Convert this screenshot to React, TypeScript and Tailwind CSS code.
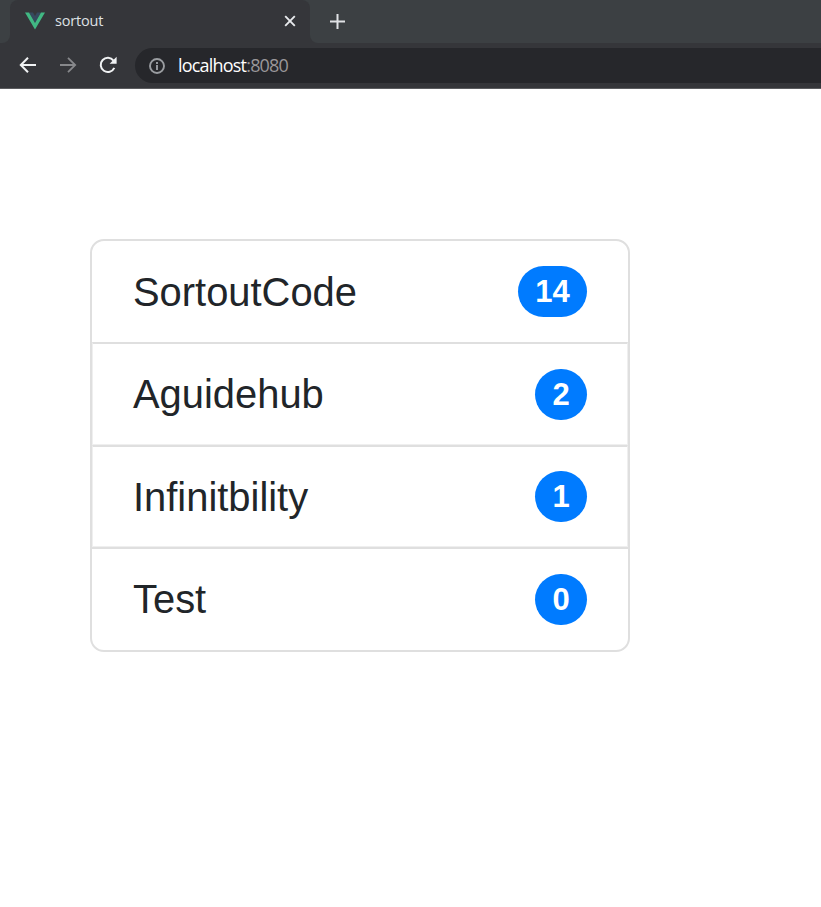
const items = [
  { name: "SortoutCode", count: 14, row: "h-[101px] px-[41px]", label: "", badge: "" },
  {
    name: "Aguidehub",
    count: 2,
    row: "h-[103px] border border-t-2 border-[#efefef] border-t-[#dfdfdf] px-10",
    label: "-mt-px",
    badge: "mt-px",
  },
  {
    name: "Infinitbility",
    count: 1,
    row: "h-[102px] border border-t-2 border-[#efefef] border-t-[#dfdfdf] px-10",
    label: "mt-px",
    badge: "",
  },
  {
    name: "Test",
    count: 0,
    row: "h-[103px] border-t-2 border-[#dfdfdf] px-[41px]",
    label: "-mt-[2px]",
    badge: "",
  },
];

function TabStrip() {
  return (
    <div className="flex h-[43px] bg-[#3c4043]">
      <div className="flex w-[10px] bg-[#35363a]">
        <div className="w-full rounded-br-[8px] bg-[#3c4043]" />
      </div>
      <div className="flex w-[300px] items-center rounded-t-[8px] bg-[#35363a] pl-[15px] pr-[14px]">
        <svg className="mt-[-2px] h-[18px] w-5" viewBox="0 0 20 18">
          <path d="M4 .5h4l2 3.4L12 .5h4L10 11z" fill="#35495e" />
          <path d="M0 .5h4L10 11 16 .5h4L10 17.5z" fill="#41b883" />
        </svg>
        <span className="ml-[10px] mt-[-2px] flex-1 text-[14.5px] leading-5 tracking-[-0.2px] text-[#dfe1e5]">
          sortout
        </span>
        <svg className="mt-[-1px] h-3 w-3" viewBox="0 0 12 12" fill="none" stroke="#e8eaed" strokeWidth="1.9">
          <path d="M1.2 1.2l9.6 9.6M10.8 1.2l-9.6 9.6" />
        </svg>
      </div>
      <div className="flex-1 bg-[#35363a]">
        <div className="flex h-full items-center rounded-bl-[8px] bg-[#3c4043] pl-5">
          <svg className="h-[15px] w-[15px]" viewBox="0 0 15 15" fill="none" stroke="#e0e2e5" strokeWidth="2">
            <path d="M7.5 0v15M0 7.5h15" />
          </svg>
        </div>
      </div>
    </div>
  );
}

function Toolbar() {
  return (
    <div className="flex h-[46px] border-b border-[#5b5c5f] bg-[#35363a] pt-[5px]">
      <div className="flex h-[35px] w-[135px] items-center gap-6 pl-[19px]">
        <svg className="-mt-px h-4 w-[17px]" viewBox="0 0 17 16" fill="none" stroke="#f1f3f4" strokeWidth="2">
          <path d="M17 8H2M9 .8L1.8 8 9 15.2" />
        </svg>
        <svg className="-mt-px h-4 w-[17px]" viewBox="0 0 17 16" fill="none" stroke="#87888b" strokeWidth="1.8">
          <path d="M0 8h15M8 .8L15.2 8 8 15.2" />
        </svg>
        <svg className="ml-[-2px] -mt-px h-[18px] w-[18px]" viewBox="0 0 18 18" fill="none">
          <path d="M14.5 4.6A7.1 7.1 0 1 0 15.3 11.8" stroke="#f1f3f4" strokeWidth="2" />
          <path d="M17.6 .8v7h-7z" fill="#f1f3f4" />
        </svg>
      </div>
      <div className="flex h-[35px] flex-1 items-center rounded-l-full bg-[#26272b] pl-[14px]">
        <svg className="h-4 w-4" viewBox="0 0 16 16" fill="none" stroke="#9a9da1">
          <circle cx="8" cy="8" r="7" strokeWidth="1.9" />
          <path d="M8 7v5M8 4v2" strokeWidth="1.9" />
        </svg>
        <span className="-mt-px ml-[13px] text-[18px] leading-6 tracking-[-0.8px] text-white">
          localhost<span className="text-[#9a979a]">:8080</span>
        </span>
      </div>
    </div>
  );
}

export default function App() {
  return (
    <div className="min-h-[907px] bg-white">
      <header className="font-['Open_Sans','Noto_Sans',sans-serif]">
        <TabStrip />
        <Toolbar />
      </header>
      <main className="pl-[90px] pt-[150px] font-['Liberation_Sans',Arial,sans-serif]">
        <ul className="w-[540px] rounded-[14px] border-2 border-[#dfdfdf]">
          {items.map((item) => (
            <li key={item.name} className={`flex items-center justify-between ${item.row}`}>
              <span className={`text-[39.9px] leading-[60px] text-[#212529] ${item.label}`}>{item.name}</span>
              <span
                className={`flex h-[51px] items-center rounded-full bg-[#007bff] px-[17.3px] text-[31px] font-bold leading-none text-white ${item.badge}`}
              >
                {item.count}
              </span>
            </li>
          ))}
        </ul>
      </main>
    </div>
  );
}
